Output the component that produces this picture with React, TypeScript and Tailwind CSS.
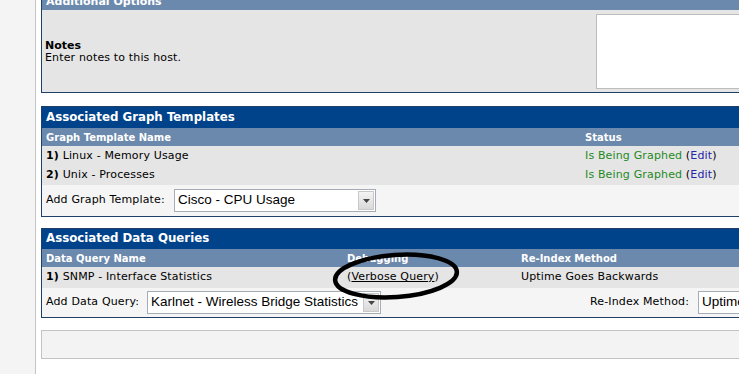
import React from "react";

const font = { fontFamily: '"DejaVu Sans", Verdana, sans-serif' };

function FakeSelect({ value, width }: { value: string; width: string }) {
  return (
    <div
      className={`flex h-[23px] shrink-0 items-stretch border border-[#a5acb5] bg-white ${width}`}
    >
      <div
        className="flex flex-1 items-center overflow-hidden whitespace-nowrap pl-[3px] text-[13.5px] tracking-normal text-black"
        style={{ fontFamily: '"Liberation Sans", Arial, sans-serif' }}
      >
        {value}
      </div>
      <div className="m-[1px] flex w-[16px] items-center justify-center border border-[#c8c8c8] bg-gradient-to-b from-[#f4f4f4] to-[#d9d9d9]">
        <svg width="7" height="4" viewBox="0 0 7 4">
          <path d="M0 0 L7 0 L3.5 4 Z" fill="#444" />
        </svg>
      </div>
    </div>
  );
}

function Status() {
  return (
    <div className="whitespace-nowrap text-[#1f8a1f]">
      Is Being Graphed <span className="text-black">(</span>
      <span className="text-[#2525a8]">Edit</span>
      <span className="text-black">)</span>
    </div>
  );
}

export default function App() {
  return (
    <div
      className="relative flex h-[374px] w-[739px] overflow-hidden bg-white text-[11px] tracking-[0.15px] text-black"
      style={font}
    >
      <div className="w-[36px] shrink-0 border-r border-[#c4c4c4] bg-[#f4f4f4]" />
      <div className="w-[760px] shrink-0 pl-[5px]">
        {/* Additional Options */}
        <div className="-mt-[10px] border border-t-0 border-[#1f3f68]">
          <div className="flex h-[20px] items-end bg-[#6b88ad] pb-[2px] pl-[4px] text-[11px] font-bold leading-[12px] tracking-normal text-white">
            Additional Options
          </div>
          <div className="flex h-[82px] bg-[#e5e5e5]">
            <div className="flex w-[550px] flex-col justify-center pl-[3px] pt-[2px] leading-[12px]">
              <div className="font-bold tracking-normal">Notes</div>
              <div>Enter notes to this host.</div>
            </div>
            <div className="ml-[4px] mt-[4px] h-[75px] flex-1 border border-[#bcbcbc] bg-white" />
          </div>
        </div>

        {/* Associated Graph Templates */}
        <div className="mt-[13px] border border-[#1f3f68]">
          <div className="flex h-[21px] items-center bg-[#00438b] pl-[4px] text-[11.8px] font-bold tracking-normal text-white">
            Associated Graph Templates
          </div>
          <div className="flex h-[18px] items-center bg-[#6b88ad] text-[10px] font-bold tracking-normal text-white">
            <div className="w-[543px] pl-[4px]">Graph Template Name</div>
            <div>Status</div>
          </div>
          <div className="flex h-[20px] items-center bg-[#e5e5e5]">
            <div className="w-[543px] pl-[4px]">
              <b>1)</b> Linux - Memory Usage
            </div>
            <Status />
          </div>
          <div className="flex h-[19px] items-center bg-[#e5e5e5]">
            <div className="w-[543px] pl-[4px]">
              <b>2)</b> Unix - Processes
            </div>
            <Status />
          </div>
          <div className="flex h-[31px] items-center bg-[#f5f5f5] pl-[4px]">
            <div className="w-[128px] shrink-0 whitespace-nowrap">Add Graph Template:</div>
            <FakeSelect value="Cisco - CPU Usage" width="w-[202px]" />
          </div>
        </div>

        {/* Associated Data Queries */}
        <div className="mt-[11px] border border-[#1f3f68]">
          <div className="flex h-[20px] items-center bg-[#00438b] pl-[4px] text-[11.8px] font-bold tracking-normal text-white">
            Associated Data Queries
          </div>
          <div className="flex h-[18px] items-center bg-[#6b88ad] text-[10px] font-bold tracking-normal text-white">
            <div className="w-[305px] pl-[4px]">Data Query Name</div>
            <div className="w-[174px]">Debugging</div>
            <div>Re-Index Method</div>
          </div>
          <div className="flex h-[21px] items-center bg-[#e5e5e5]">
            <div className="w-[305px] pl-[4px]">
              <b>1)</b> SNMP - Interface Statistics
            </div>
            <div className="w-[174px] whitespace-nowrap">
              (<span className="underline">Verbose Query</span>)
            </div>
            <div className="whitespace-nowrap">Uptime Goes Backwards</div>
          </div>
          <div className="flex h-[29px] items-center bg-[#f5f5f5] pl-[4px]">
            <div className="w-[101px] shrink-0 whitespace-nowrap">Add Data Query:</div>
            <FakeSelect value="Karlnet - Wireless Bridge Statistics" width="w-[234px]" />
            <div className="w-[317px] shrink-0 whitespace-nowrap pr-[9px] text-right">
              Re-Index Method:
            </div>
            <FakeSelect value="Uptime Goes Backwards" width="w-[180px]" />
          </div>
        </div>

        {/* Bottom bar */}
        <div className="mt-[12px] h-[29px] border-y border-l border-[#c3c3c3] bg-[#f3f3f3]" />
      </div>

      <svg
        className="pointer-events-none absolute left-0 top-0"
        width="739"
        height="374"
        viewBox="0 0 739 374"
      >
        <ellipse
          cx="396"
          cy="276"
          rx="61"
          ry="21"
          transform="rotate(-4 396 276)"
          fill="none"
          stroke="#000"
          strokeWidth="4.5"
        />
      </svg>
    </div>
  );
}
